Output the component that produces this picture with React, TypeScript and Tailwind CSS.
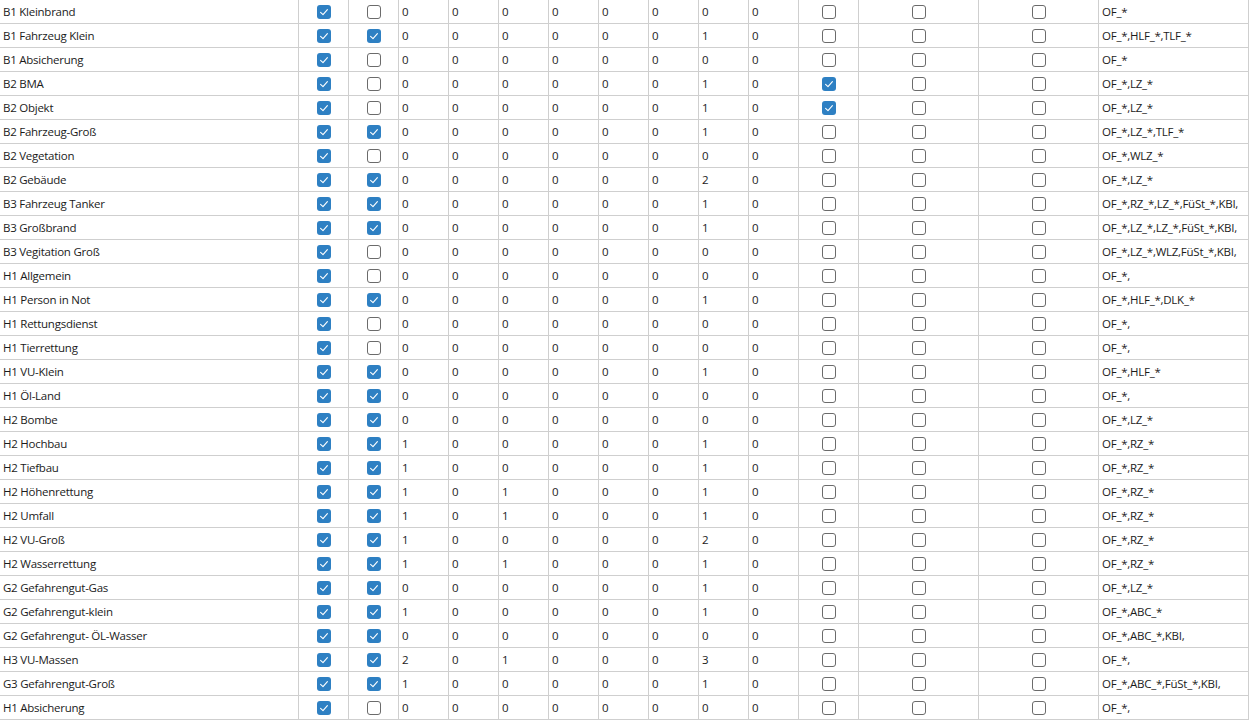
import React from 'react';

type Row = {
  name: string;
  a: boolean;
  b: boolean;
  nums: number[];
  c: boolean;
  units: string;
};

const rows: Row[] = [
  { name: 'B1 Kleinbrand', a: true, b: false, nums: [0, 0, 0, 0, 0, 0, 0, 0], c: false, units: 'OF_*' },
  { name: 'B1 Fahrzeug Klein', a: true, b: true, nums: [0, 0, 0, 0, 0, 0, 1, 0], c: false, units: 'OF_*,HLF_*,TLF_*' },
  { name: 'B1 Absicherung', a: true, b: false, nums: [0, 0, 0, 0, 0, 0, 0, 0], c: false, units: 'OF_*' },
  { name: 'B2 BMA', a: true, b: false, nums: [0, 0, 0, 0, 0, 0, 1, 0], c: true, units: 'OF_*,LZ_*' },
  { name: 'B2 Objekt', a: true, b: false, nums: [0, 0, 0, 0, 0, 0, 1, 0], c: true, units: 'OF_*,LZ_*' },
  { name: 'B2 Fahrzeug-Groß', a: true, b: true, nums: [0, 0, 0, 0, 0, 0, 1, 0], c: false, units: 'OF_*,LZ_*,TLF_*' },
  { name: 'B2 Vegetation', a: true, b: false, nums: [0, 0, 0, 0, 0, 0, 0, 0], c: false, units: 'OF_*,WLZ_*' },
  { name: 'B2 Gebäude', a: true, b: true, nums: [0, 0, 0, 0, 0, 0, 2, 0], c: false, units: 'OF_*,LZ_*' },
  { name: 'B3 Fahrzeug Tanker', a: true, b: true, nums: [0, 0, 0, 0, 0, 0, 1, 0], c: false, units: 'OF_*,RZ_*,LZ_*,FüSt_*,KBI,' },
  { name: 'B3 Großbrand', a: true, b: true, nums: [0, 0, 0, 0, 0, 0, 1, 0], c: false, units: 'OF_*,LZ_*,LZ_*,FüSt_*,KBI,' },
  { name: 'B3 Vegitation Groß', a: true, b: false, nums: [0, 0, 0, 0, 0, 0, 0, 0], c: false, units: 'OF_*,LZ_*,WLZ,FüSt_*,KBI,' },
  { name: 'H1 Allgemein', a: true, b: false, nums: [0, 0, 0, 0, 0, 0, 0, 0], c: false, units: 'OF_*,' },
  { name: 'H1 Person in Not', a: true, b: true, nums: [0, 0, 0, 0, 0, 0, 1, 0], c: false, units: 'OF_*,HLF_*,DLK_*' },
  { name: 'H1 Rettungsdienst', a: true, b: false, nums: [0, 0, 0, 0, 0, 0, 0, 0], c: false, units: 'OF_*,' },
  { name: 'H1 Tierrettung', a: true, b: false, nums: [0, 0, 0, 0, 0, 0, 0, 0], c: false, units: 'OF_*,' },
  { name: 'H1 VU-Klein', a: true, b: true, nums: [0, 0, 0, 0, 0, 0, 1, 0], c: false, units: 'OF_*,HLF_*' },
  { name: 'H1 Öl-Land', a: true, b: true, nums: [0, 0, 0, 0, 0, 0, 0, 0], c: false, units: 'OF_*,' },
  { name: 'H2 Bombe', a: true, b: true, nums: [0, 0, 0, 0, 0, 0, 0, 0], c: false, units: 'OF_*,LZ_*' },
  { name: 'H2 Hochbau', a: true, b: true, nums: [1, 0, 0, 0, 0, 0, 1, 0], c: false, units: 'OF_*,RZ_*' },
  { name: 'H2 Tiefbau', a: true, b: true, nums: [1, 0, 0, 0, 0, 0, 1, 0], c: false, units: 'OF_*,RZ_*' },
  { name: 'H2 Höhenrettung', a: true, b: true, nums: [1, 0, 1, 0, 0, 0, 1, 0], c: false, units: 'OF_*,RZ_*' },
  { name: 'H2 Umfall', a: true, b: true, nums: [1, 0, 1, 0, 0, 0, 1, 0], c: false, units: 'OF_*,RZ_*' },
  { name: 'H2 VU-Groß', a: true, b: true, nums: [1, 0, 0, 0, 0, 0, 2, 0], c: false, units: 'OF_*,RZ_*' },
  { name: 'H2 Wasserrettung', a: true, b: true, nums: [1, 0, 1, 0, 0, 0, 1, 0], c: false, units: 'OF_*,RZ_*' },
  { name: 'G2 Gefahrengut-Gas', a: true, b: true, nums: [0, 0, 0, 0, 0, 0, 1, 0], c: false, units: 'OF_*,LZ_*' },
  { name: 'G2 Gefahrengut-klein', a: true, b: true, nums: [1, 0, 0, 0, 0, 0, 1, 0], c: false, units: 'OF_*,ABC_*' },
  { name: 'G2 Gefahrengut- ÖL-Wasser', a: true, b: true, nums: [0, 0, 0, 0, 0, 0, 0, 0], c: false, units: 'OF_*,ABC_*,KBI,' },
  { name: 'H3 VU-Massen', a: true, b: true, nums: [2, 0, 1, 0, 0, 0, 3, 0], c: false, units: 'OF_*,' },
  { name: 'G3 Gefahrengut-Groß', a: true, b: true, nums: [1, 0, 0, 0, 0, 0, 1, 0], c: false, units: 'OF_*,ABC_*,FüSt_*,KBI,' },
  { name: 'H1 Absicherung', a: true, b: false, nums: [0, 0, 0, 0, 0, 0, 0, 0], c: false, units: 'OF_*,' },
];

function Box({ checked }: { checked: boolean }) {
  if (checked) {
    return (
      <div className="w-[14px] h-[14px] rounded-[3px] bg-[#2e80c3] flex items-center justify-center">
        <svg width="14" height="14" viewBox="0 0 14 14" fill="none">
          <path d="M3.6 7.4 L6 9.6 L10.4 4.6" stroke="#ffffff" strokeWidth="1.1" strokeLinecap="round" strokeLinejoin="round" />
        </svg>
      </div>
    );
  }
  return <div className="w-[14px] h-[14px] rounded-[3px] border border-[#6b6b6b] bg-white" />;
}

const cell = 'h-[24px] border-r border-b border-[#cfcfcf] flex items-center';

export default function App() {
  return (
    <div className="w-[1252px] h-[720px] overflow-hidden bg-white text-[11.5px] tracking-[-0.25px] text-[#1b1b1b] font-['Open_Sans',sans-serif]">
      {rows.map((r, i) => (
        <div key={i} className="flex">
          <div className={`${cell} w-[299px] pl-[3px] pt-[1px]`}>{r.name}</div>
          <div className={`${cell} w-[50px] justify-center`}>
            <Box checked={r.a} />
          </div>
          <div className={`${cell} w-[50px] justify-center`}>
            <Box checked={r.b} />
          </div>
          {r.nums.map((n, j) => (
            <div key={j} className={`${cell} w-[50px] pl-[3px] pt-[1px]`}>
              {n}
            </div>
          ))}
          <div className={`${cell} w-[60px] justify-center`}>
            <Box checked={r.c} />
          </div>
          <div className={`${cell} w-[120px] justify-center`}>
            <Box checked={false} />
          </div>
          <div className={`${cell} w-[120px] justify-center`}>
            <Box checked={false} />
          </div>
          <div className={`${cell} w-[150px] pl-[3px] pt-[1px]`}>{r.units}</div>
        </div>
      ))}
    </div>
  );
}
